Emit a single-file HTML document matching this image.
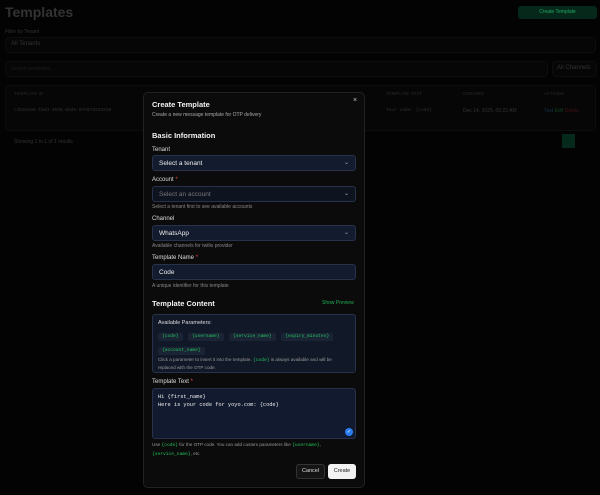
<!DOCTYPE html>
<html><head><style>
*{box-sizing:border-box;margin:0;padding:0}
body{width:600px;height:495px;background:#030303;font-family:"Liberation Sans",sans-serif;position:relative;overflow:hidden;color:#e5e5e5}
.a{position:absolute;white-space:nowrap}
.bg{color:#333}
.box{position:absolute;border:1px solid #0d0d0d;background:#060606;border-radius:4px}
.m{position:absolute;left:143px;top:92px;width:222px;height:396px;background:#0b0b0b;border:1px solid #222;border-radius:5px}
.lbl{font-size:6px;color:#ddd}
.sel{position:absolute;left:152px;width:204px;height:16px;background:#131b2e;border:1px solid #28324a;border-radius:3px;font-size:6.5px;color:#eee;padding:4px 6px}
.sel .c{position:absolute;right:6px;top:3px;font-size:6px;color:#aaa}
.hp{font-size:5px;color:#888}
.chip{display:inline-block;background:#1b2434;color:#22c55e;font-family:"Liberation Mono",monospace;font-size:4.6px;padding:1px 4px;line-height:6px;border-radius:2px;margin-right:1px}
.g{color:#22c55e;font-family:"Liberation Mono",monospace}
</style></head><body>
<div class="a bg" style="left:5px;top:4px;font-size:14px;font-weight:bold">Templates</div>
<div class="a" style="left:518px;top:6px;width:79px;height:13px;background:#05281a;border-radius:3px;font-size:5px;color:#2a6;text-align:center;line-height:13px">Create Template</div>
<div class="a bg" style="left:5px;top:29px;font-size:5px">Filter by Tenant</div>
<div class="box" style="left:5px;top:37px;width:591px;height:16px"></div>
<div class="a bg" style="left:11px;top:41px;font-size:6px">All Tenants</div>
<div class="box" style="left:5px;top:61px;width:543px;height:16px"></div>
<div class="a" style="left:11px;top:66px;font-size:5px;color:#1e1e1e">Search templates...</div>
<div class="box" style="left:552px;top:61px;width:45px;height:16px"></div>
<div class="a bg" style="left:557px;top:65px;font-size:6px">All Channels</div>
<div class="box" style="left:5px;top:85px;width:591px;height:46px"></div>
<div class="a" style="left:14px;top:91px;font-size:4.5px;color:#2a2a2a">TEMPLATE ID</div>
<div class="a" style="left:386px;top:91px;font-size:4.5px;color:#2a2a2a">TEMPLATE TEXT</div>
<div class="a" style="left:463px;top:91px;font-size:4.5px;color:#2a2a2a">CREATED</div>
<div class="a" style="left:544px;top:91px;font-size:4.5px;color:#2a2a2a">ACTIONS</div>
<div class="a" style="left:14px;top:108px;font-size:4.5px;color:#333;font-family:'Liberation Mono',monospace">c3b64106-fad4-4935-8bd9-07e978292038</div>
<div class="a" style="left:386px;top:108px;font-size:4.5px;color:#333;font-family:'Liberation Mono',monospace">Your code: {code}</div>
<div class="a" style="left:463px;top:108px;font-size:5px;color:#333">Dec 14, 2025, 05:22 AM</div>
<div class="a" style="left:544px;top:108px;font-size:5px;color:#134">Test <span style="color:#142">Edit</span> <span style="color:#411">Delete</span></div>
<div class="a" style="left:14px;top:139px;font-size:5px;color:#333">Showing 1 to 1 of 1 results</div>
<div class="a" style="left:562px;top:134px;width:13px;height:14px;background:#052a1c"></div>

<div class="m"></div>
<div class="a" style="left:353px;top:97px;font-size:7px;color:#ccc">×</div>
<div class="a" style="left:152px;top:100px;font-size:7.5px;font-weight:bold;color:#f2f2f2">Create Template</div>
<div class="a hp" style="left:152px;top:112px;color:#aaa">Create a new message template for OTP delivery</div>
<div class="a" style="left:152px;top:131px;font-size:7.5px;font-weight:bold;color:#f2f2f2">Basic Information</div>
<div class="a lbl" style="left:152px;top:147px">Tenant</div>
<div class="sel" style="top:155px">Select a tenant<span class="c">⌄</span></div>
<div class="a lbl" style="left:152px;top:177px">Account <span style="color:#e44">*</span></div>
<div class="sel" style="top:186px;background:#0e1320;color:#777">Select an account<span class="c">⌄</span></div>
<div class="a hp" style="left:152px;top:204px">Select a tenant first to see available accounts</div>
<div class="a lbl" style="left:152px;top:216px">Channel</div>
<div class="sel" style="top:225px">WhatsApp<span class="c">⌄</span></div>
<div class="a hp" style="left:152px;top:243px">Available channels for twilio provider</div>
<div class="a lbl" style="left:152px;top:255px">Template Name <span style="color:#e44">*</span></div>
<div class="sel" style="top:264px">Code</div>
<div class="a hp" style="left:152px;top:283px">A unique identifier for this template</div>
<div class="a" style="left:152px;top:299px;font-size:7.5px;font-weight:bold;color:#f2f2f2">Template Content</div>
<div class="a" style="left:322px;top:300px;font-size:5px;color:#1fae55">Show Preview</div>
<div class="a" style="left:152px;top:314px;width:204px;height:59px;background:#111827;border:1px solid #28324a;border-radius:3px;padding:5px 5px;white-space:normal">
<div style="font-size:5.5px;color:#ddd;margin-bottom:1px">Available Parameters:</div>
<div style="line-height:11px;white-space:normal"><span class="chip">{code}</span> <span class="chip">{username}</span> <span class="chip">{service_name}</span> <span class="chip">{expiry_minutes}</span> <span class="chip">{account_name}</span></div>
<div style="font-size:4.6px;color:#999;white-space:normal;line-height:7px;margin-top:1px">Click a parameter to insert it into the template. <span class="g">{code}</span> is always available and will be replaced with the OTP code.</div>
</div>
<div class="a lbl" style="left:152px;top:379px">Template Text <span style="color:#e44">*</span></div>
<div class="a" style="left:152px;top:388px;width:204px;height:51px;background:#111a2e;border:1px solid #28324a;border-radius:3px;padding:5px 5px;font-family:'Liberation Mono',monospace;font-size:5.3px;color:#eee;line-height:7.5px;white-space:pre">Hi {first_name}
Here is your code for yoyo.com: {code}</div>
<div class="a" style="left:345px;top:428px;width:8px;height:8px;border-radius:50%;background:#2b7cf0;color:#fff;font-size:5px;text-align:center;line-height:8px">✓</div>
<div class="a" style="left:152px;top:441px;font-size:4.6px;color:#999;line-height:8px">Use <span class="g">{code}</span> for the OTP code. You can add custom parameters like <span class="g">{username}</span>,<br><span class="g">{service_name}</span>, etc.</div>
<div class="a" style="left:296px;top:464px;width:29px;height:15px;background:#151515;border:1px solid #333;border-radius:3px;font-size:5.5px;color:#ddd;text-align:center;line-height:13px">Cancel</div>
<div class="a" style="left:328px;top:464px;width:28px;height:15px;background:#f2f2f2;border-radius:3px;font-size:5.5px;color:#222;text-align:center;line-height:15px">Create</div>
</body></html>
